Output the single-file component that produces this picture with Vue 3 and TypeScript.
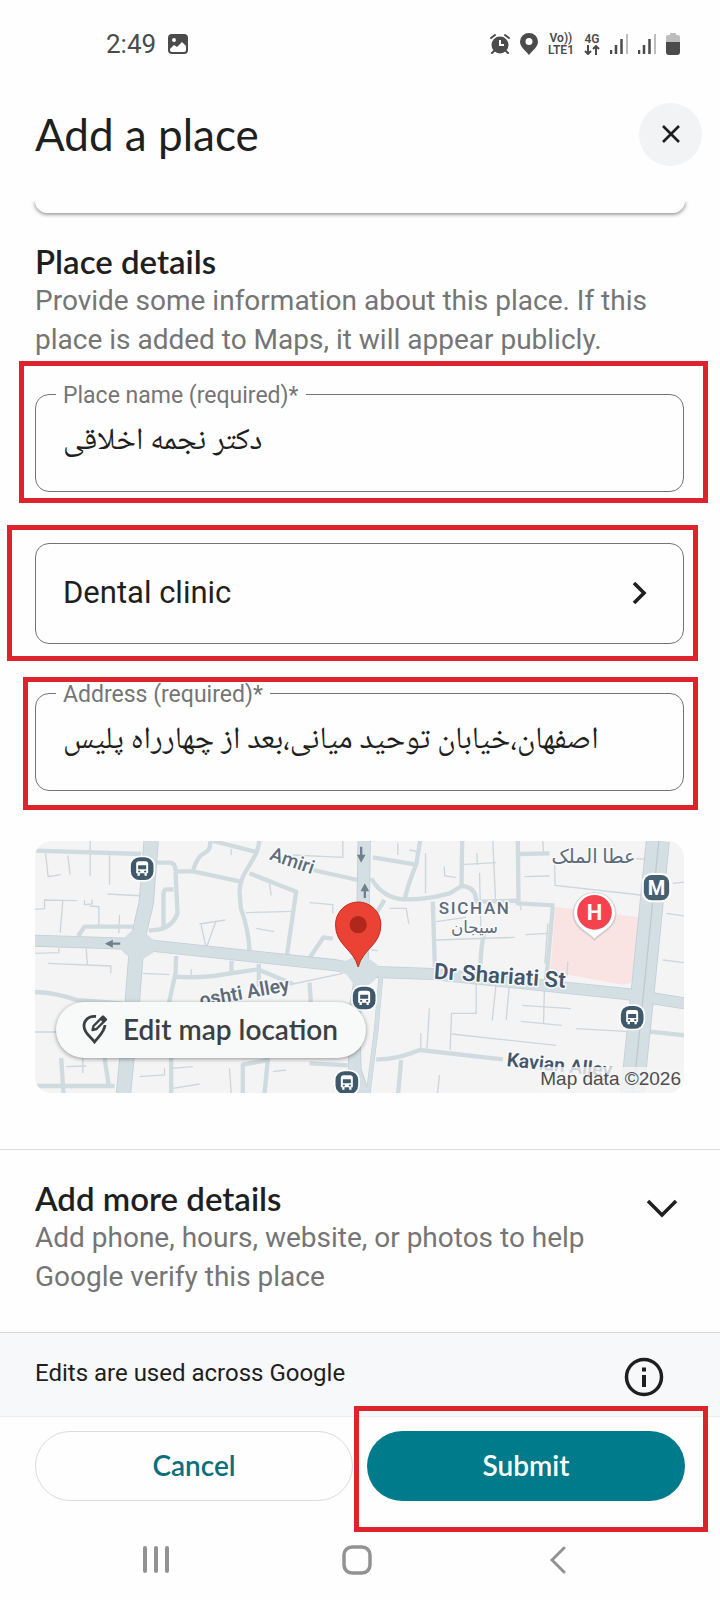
<script setup lang="ts">
import { ref } from 'vue'

const placeName = ref('دکتر نجمه اخلاقی')
const category = ref('Dental clinic')
const address = ref('اصفهان،خیابان توحید میانی،بعد از چهارراه پلیس')

// Map geometry: minor streets, lanes and bus stops in the map's own units
const streets: string[] = [
  'M45 62L365 72', 'M412 98H452Q468 98 468 124', 'M468 124H520L665 155', 'M522 120Q530 80 560 66Q575 55 572 33',
  'M580 33L710 66', 'M720 33L712 66Q700 90 680 122Q662 150 660 185L664 235Q688 300 690 365', 'M690 130L830 185L802 378',
  'M468 124L474 250Q460 290 420 298L388 302', 'M462 178H440Q432 180 432 192V290', 'M176 318L195 290H340',
  'M870 384L912 322L940 326', 'M880 120L1015 150', 'M470 378L468 430L448 520', 'M468 440Q540 446 620 432L715 418L820 462',
  'M636 392V428', 'M45 486Q110 488 170 510L310 520', 'M718 402V470', 'M870 458L874 516', 'M45 768L285 768',
  'M125 684L132 790', 'M255 684L268 768', 'M455 684V790', 'M670 790V704L745 690L735 790', 'M870 700L985 706',
  'M1060 82L1190 104Q1170 150 1155 208', 'M1202 33L1190 104', 'M1055 145Q1090 205 1155 208Q1220 210 1290 190L1326 168L1328 33',
  'M1326 168Q1370 170 1370 215L1490 212L1495 220L1605 226', 'M1495 33L1497 215', 'M1600 230L1582 430', 'M1240 215L1246 410',
  'M1395 305Q1385 340 1382 415', 'M1095 210L1070 250', 'M1500 72L1590 70', 'M1070 688Q1130 690 1200 660L1450 688',
  'M1145 690L1136 790', 'M1890 605L1995 616',
]
const lanes: string[] = [
  'M78 70L86 140L124 134', 'M145 76L152 134', 'M212 33V138', 'M270 76V164', 'M45 238L75 236V210L172 212', 'M195 210V224L218 222V208',
  'M210 228L238 230V290', 'M264 192L376 198', 'M130 212L122 308', 'M300 254L298 310', 'M540 282L618 270', 'M545 285L560 355L590 272',
  'M680 248L820 244', 'M710 295L764 305', 'M870 218L940 224V250', 'M45 370L118 368V355', 'M200 356L204 405', 'M85 400L274 408V430',
  'M370 430L450 434', 'M515 418V438', 'M45 606L110 606', 'M635 56V76', 'M750 160L755 196', 'M820 75L970 82V33', 'M970 430L820 462',
  'M140 710L200 708', 'M190 684V730', 'M360 740L435 735V715', 'M455 715L520 710', 'M460 775L540 762', 'M630 715L635 790', 'M760 725L800 720',
  'M1170 60L1200 66', 'M1135 38V75', 'M1218 70V190', 'M1274 110L1276 138L1310 142', 'M1326 104L1430 98', 'M1380 128L1384 290',
  'M1420 33L1428 210', 'M1372 70L1374 104', 'M1110 235H1160L1168 282', 'M1250 330L1486 322', 'M1518 314L1586 310', 'M1585 280L1576 400',
  'M1515 140L1590 138', 'M1605 104L1607 166L1890 198', 'M1570 33L1572 70', 'M1250 275L1340 262', 'M1370 410V550H1296L1292 660',
  'M1430 460L1418 572', 'M1470 460L1460 570', 'M1576 430L1572 580', 'M1508 526L1654 536', 'M1504 574L1626 586', 'M1670 596L1820 604',
  'M1296 612L1610 646', 'M1230 535L1222 660', 'M1204 610V660', 'M1645 395L1642 440', 'M1260 735L1254 790', 'M1930 390L1995 398',
  'M1940 250L1995 258', 'M1960 160L1995 156', 'M1055 360L1075 362', 'M1850 86L1885 88', 'M1500 215L1505 240',
]
const stops: [number, number][] = [[368, 116], [1034, 504], [982, 758], [1838, 562]]
</script>

<template>
  <div class="screen">
    <div class="status">
      <div class="status-left">
        <span class="clock">2:49</span>
        <svg width="20" height="20" viewBox="0 0 20 20">
          <rect width="20" height="20" rx="4" fill="#4b4b4b" />
          <circle cx="6" cy="6" r="2" fill="#fefefe" />
          <path d="M2 15l4-4 3 2 5-5 4 4v4q0 2-2 2H4q-2 0-2-2z" fill="#fefefe" />
        </svg>
      </div>
      <div class="status-right">
        <svg width="20" height="22" viewBox="0 0 20 22">
          <circle cx="10" cy="12" r="8.500" fill="#4b4b4b" />
          <path d="M1 5l4-3M19 5l-4-3M4 18l-2 2M16 18l2 2" stroke="#4b4b4b" stroke-width="2" stroke-linecap="round" />
          <path d="M10 7v5h4" fill="none" stroke="#fefefe" stroke-width="2" />
        </svg>
        <svg width="18" height="22" viewBox="0 0 18 22">
          <path fill-rule="evenodd" d="M9 22C5 17 0 14 0 8.500a9 8.500 0 0 1 18 0C18 14 13 17 9 22zM9 5a3.500 3.500 0 1 0 0 7 3.500 3.500 0 0 0 0-7z" fill="#4b4b4b" />
        </svg>
        <span class="stack"><span>Vo))</span><span>LTE1</span></span>
        <span class="stack">
          <span>4G</span>
          <svg width="16" height="10" viewBox="0 0 16 10"><path d="M4 0v9M1 6l3 3 3-3M12 10V1M9 4l3-3 3 3" fill="none" stroke="#4b4b4b" stroke-width="2" /></svg>
        </span>
        <svg v-for="n in 2" :key="n" width="18" height="20" viewBox="0 0 18 20" class="signal">
          <path d="M1 16v4M6 11v9M11.500 5v15" stroke="#4b4b4b" stroke-width="2.500" />
          <path d="M17 0v20" stroke="#bdbdbd" stroke-width="2" />
        </svg>
        <svg width="14" height="22" viewBox="0 0 14 22" class="battery">
          <path d="M4 2V1q0-1 1-1h4q1 0 1 1v1h2q2 0 2 2v6H0V4q0-2 2-2z" fill="#bdbdbd" />
          <path d="M0 9h14v10q0 3-3 3H3q-3 0-3-3z" fill="#4b4b4b" />
        </svg>
      </div>
    </div>

    <header class="header">
      <h1>Add a place</h1>
      <button type="button" class="close" aria-label="Close">
        <svg width="20" height="20" viewBox="0 0 20 20"><path d="M2 2l16 16M18 2L2 18" stroke="#1f1f1f" stroke-width="2.600" /></svg>
      </button>
    </header>

    <main>
      <div class="card-end"></div>

      <section class="details">
        <h2>Place details</h2>
        <p>Provide some information about this place. If this place is added to Maps, it will appear publicly.</p>

        <div class="marked mark-name">
          <fieldset>
            <legend><label for="place-name">Place name (required)*</label></legend>
            <input id="place-name" v-model="placeName" type="text" dir="rtl">
          </fieldset>
        </div>

        <div class="marked mark-category">
          <button type="button" class="category">
            <span>{{ category }}</span>
            <svg width="16" height="24" viewBox="0 0 16 24"><path d="M2 2l10 10L2 22" fill="none" stroke="#1f1f1f" stroke-width="3.600" /></svg>
          </button>
        </div>

        <div class="marked mark-address">
          <fieldset>
            <legend><label for="address">Address (required)*</label></legend>
            <input id="address" v-model="address" type="text" dir="rtl">
          </fieldset>
        </div>

        <div class="map">
          <svg class="map-canvas" viewBox="45 33 1950 756" preserveAspectRatio="xMidYMid slice" role="img" aria-label="Map">
            <rect x="45" y="33" width="1950" height="756" fill="#f4f4f5" />
            <path d="M1608 230L1862 262L1846 435Q1840 462 1812 464L1592 425z" fill="#fae4e3" />
            <g fill="none" stroke="#ccd6dc" stroke-width="4">
              <path v-for="d in lanes" :key="d" :d="d" />
            </g>
            <g fill="none" stroke="#d0dbe0" stroke-width="13" stroke-linejoin="round">
              <path v-for="d in streets" :key="d" :d="d" />
            </g>
            <g fill="none" stroke-linejoin="round">
              <g stroke="#c2cfd7">
                <path d="M395 33L380 220L352 340L338 520L312 790" stroke-width="46" />
                <path d="M45 332L350 342L950 406L1050 425L1240 432L1820 492L1995 520" stroke-width="36" />
                <path d="M1034 33L1028 420L1003 560L1006 720L1030 790" stroke-width="40" />
                <path d="M1085 430L1070 600L1046 790" stroke-width="14" />
                <path d="M1915 33L1870 480L1838 790" stroke-width="72" />
              </g>
              <g stroke="#d4dfe4">
                <path d="M395 33L380 220L352 340L338 520L312 790" stroke-width="41" />
                <path d="M45 332L350 342L950 406L1050 425L1240 432L1820 492L1995 520" stroke-width="31" />
                <path d="M1034 33L1028 420L1003 560L1006 720L1030 790" stroke-width="35" />
                <path d="M1085 430L1070 600L1046 790" stroke-width="11" />
                <path d="M1915 33L1870 480L1838 790" stroke-width="67" />
              </g>
              <path d="M1918 33L1873 480L1841 790" stroke="#bccad3" stroke-width="4" />
            </g>
            <path d="M352 295L400 335L396 365L352 392L318 365L300 345z" fill="#d4dfe4" stroke="#d4dfe4" stroke-width="12" stroke-linejoin="round" />
            <path d="M1026 375L1070 408L1064 445L1020 480L985 430L950 412z" fill="#d4dfe4" stroke="#d4dfe4" stroke-width="10" stroke-linejoin="round" />
            <g fill="none" stroke="#70808c" stroke-width="7">
              <path d="M302 341H264" /><path d="M1025 50V84" /><path d="M1036 204V172" />
            </g>
            <path d="M256 341l24-12v24zM1025 98l-13-24h26zM1036 160l-13 24h26z" fill="#70808c" />

            <g class="map-text">
              <text x="748" y="88" transform="rotate(19 748 88)" font-size="57" font-weight="500">Amiri</text>
              <text x="544" y="530" transform="rotate(-10 544 530)" font-size="58" font-weight="600">oshti Alley</text>
              <text x="1258" y="252" font-size="51" font-weight="500" letter-spacing="5">SICHAN</text>
              <text x="1365" y="308" font-size="50" text-anchor="middle">سیجان</text>
              <text x="1722" y="98" font-size="58" text-anchor="middle">عطا الملک</text>
              <text class="main-street" x="1242" y="446" transform="rotate(4 1242 446)" font-size="67" font-weight="600">Dr Shariati St</text>
              <text class="main-street" x="1460" y="708" transform="rotate(6 1460 708)" font-size="58" font-weight="600">Kavian Alley</text>
            </g>

            <g v-for="[x, y] in stops" :key="x" :transform="`translate(${x} ${y})`">
              <rect x="-39" y="-39" width="78" height="78" rx="30" fill="#fdfdfd" />
              <rect x="-34" y="-34" width="68" height="68" rx="26" fill="#3f596b" />
              <path fill-rule="evenodd" d="M-18-14q0-8 8-8h20q8 0 8 8v28h-4v7h-7v-7h-14v7h-7v-7h-4zM-12-10v12h24v-12zM-12 6v5h6v-5zM6 6v5h6v-5z" fill="#fff" />
            </g>
            <g transform="translate(1911 173)">
              <rect x="-44" y="-44" width="88" height="88" rx="28" fill="#fdfdfd" />
              <rect x="-38" y="-38" width="76" height="76" rx="24" fill="#46606f" />
              <text class="badge-text" y="22" font-size="60">M</text>
            </g>
            <g transform="translate(1725 250)">
              <path d="M0 84C-14 62-66 50-66 0a66 64 0 0 1 132 0C66 50 14 62 0 84z" fill="#b9bec4" opacity=".6" />
              <path d="M0 76C-14 56-61 44-61-2a61 60 0 0 1 122 0C61 44 14 56 0 76z" fill="#fff" />
              <circle cy="-3" r="52" fill="#f5424f" />
              <text class="badge-text" y="20" font-size="66">H</text>
            </g>
            <path d="M1016 411C1002 356 948 346 948 284a68 68 0 0 1 136 0C1084 346 1030 356 1016 411z" fill="#ea4335" stroke="#c5281c" stroke-width="3" />
            <circle cx="1016" cy="284" r="26" fill="#b1271b" />
          </svg>
          <span class="credit">Map data ©2026</span>
          <button type="button" class="edit-map">
            <svg width="26" height="30" viewBox="0 0 26 30" fill="none" stroke="#3c4043">
              <path d="M14 2.500C6 1.500 2 7 2 12c0 7 6 10 10.500 16C17 22 22.500 18 23 11" stroke-width="2.800" />
              <path d="M10.500 16l1-4L21 2.500l3 3-9.500 9.500z" stroke-width="2.400" stroke-linejoin="round" />
              <path d="M19 3.500l4 4" stroke-width="4" />
            </svg>
            <span>Edit map location</span>
          </button>
        </div>
      </section>

      <section class="more">
        <div class="more-text">
          <h2>Add more details</h2>
          <p>Add phone, hours, website, or photos to help Google verify this place</p>
        </div>
        <button type="button" class="expand" aria-label="Show more details">
          <svg width="32" height="20" viewBox="0 0 32 20"><path d="M2 2l14 14L30 2" fill="none" stroke="#1f1f1f" stroke-width="3.500" /></svg>
        </button>
      </section>

      <div class="notice">
        <span>Edits are used across Google</span>
        <button type="button" class="info" aria-label="About edits">
          <svg width="40" height="40" viewBox="0 0 40 40">
            <circle cx="20" cy="20" r="17.500" fill="none" stroke="#1f1f1f" stroke-width="3.500" />
            <path d="M20 10.500v4M20 18v12" stroke="#1f1f1f" stroke-width="4" />
          </svg>
        </button>
      </div>
    </main>

    <div class="actions">
      <button type="button" class="cancel">Cancel</button>
      <div class="marked mark-submit">
        <button type="button" class="submit">Submit</button>
      </div>
    </div>

    <nav class="system-nav">
      <button type="button" aria-label="Recent apps">
        <svg width="26" height="28" viewBox="0 0 26 28"><path d="M2 2v23M13 2v23M24 2v23" stroke="#929292" stroke-width="4" stroke-linecap="round" /></svg>
      </button>
      <button type="button" aria-label="Home">
        <svg width="30" height="30" viewBox="0 0 30 30"><rect x="2" y="2" width="26" height="26" rx="8" fill="none" stroke="#929292" stroke-width="3.500" /></svg>
      </button>
      <button type="button" aria-label="Back">
        <svg width="16" height="28" viewBox="0 0 16 28"><path d="M14 2L2 14l12 12" fill="none" stroke="#929292" stroke-width="3" stroke-linecap="round" /></svg>
      </button>
    </nav>
  </div>
</template>

<style>
body {
  margin: 0;
  background: #fefefe;
}
</style>

<style scoped>
.screen {
  font-family: Roboto, "Noto Sans", "DejaVu Sans", sans-serif;
  color: #1f1f1f;
  background: #fefefe;
  min-height: 100vh;
  display: flex;
  flex-direction: column;
}
button {
  font: inherit;
  color: inherit;
  background: none;
  border: 0;
  padding: 0;
  cursor: pointer;
}
svg {
  display: block;
  flex: none;
}
h1, h2, p {
  margin: 0;
}
.status {
  height: 88px;
  padding: 0 40px 0 106px;
  display: flex;
  align-items: center;
  justify-content: space-between;
  color: #4b4b4b;
}
.status-left {
  display: flex;
  align-items: center;
  gap: 12px;
}
.clock {
  font-size: 26px;
}
.status-right {
  display: flex;
  align-items: center;
  gap: 10px;
}
.stack {
  display: flex;
  flex-direction: column;
  align-items: center;
  font-size: 12px;
  line-height: 12px;
  font-weight: 600;
}
.header {
  height: 92px;
  padding: 0 18px 21px 35px;
  display: flex;
  align-items: center;
  justify-content: space-between;
}
h1, h2, .edit-map, .actions {
  font-family: Lato, "Open Sans", sans-serif;
}
h1 {
  font-size: 44px;
  line-height: 52px;
  font-weight: 400;
}
.close {
  width: 63px;
  height: 63px;
  border-radius: 50%;
  background: #f1f3f5;
  display: grid;
  place-items: center;
}
.card-end {
  height: 12px;
  margin: 0 35px;
  border-radius: 0 0 16px 16px;
  box-shadow: 0 1px 4px #777;
  clip-path: inset(0 -8px -8px -8px);
}
.details {
  padding: 28px 36px 56px 35px;
  display: flex;
  flex-direction: column;
}
h2 {
  font-size: 33px;
  line-height: 40px;
  font-weight: 600;
}
p {
  font-size: 28px;
  line-height: 39px;
  color: #757575;
}
.marked {
  position: relative;
}
.marked::after {
  content: "";
  position: absolute;
  border: 5px solid #dd232b;
  pointer-events: none;
}
.mark-name {
  margin-top: 22px;
}
.mark-name::after {
  inset: -20px -24px -11px -16px;
}
.mark-category {
  margin-top: 51px;
}
.mark-category::after {
  inset: -18px -14px -17px -28px;
}
.mark-address {
  margin-top: 36px;
}
.mark-address::after {
  inset: -3px -14px -19px -12px;
}
fieldset {
  margin: 0;
  min-width: 0;
  padding: 0 27px 0 20px;
  border: 1px solid #757575;
  border-radius: 14px;
}
legend {
  padding: 4px 7px 0;
  font-size: 23px;
  line-height: 22px;
  color: #757575;
}
input {
  display: block;
  box-sizing: border-box;
  width: 100%;
  height: 84px;
  padding: 0 0 14px 7px;
  border: 0;
  outline: 0;
  background: none;
  font-family: "Noto Naskh Arabic", "Noto Sans Arabic", "DejaVu Sans", sans-serif;
  font-size: 31px;
  color: #1f1f1f;
  text-align: left;
}
.category {
  width: 100%;
  height: 101px;
  padding: 0 35px 2px 27px;
  border: 1px solid #757575;
  border-radius: 14px;
  display: flex;
  align-items: center;
  justify-content: space-between;
  font-size: 31px;
}
.map {
  position: relative;
  height: 252px;
  margin-top: 50px;
  border-radius: 16px;
  overflow: hidden;
}
.map-canvas {
  width: 100%;
  height: 100%;
}
.map-text {
  fill: #5d6b7a;
  stroke: #f8f9fa;
  stroke-width: 9px;
  paint-order: stroke;
  stroke-linejoin: round;
}
.main-street {
  fill: #44566a;
}
.badge-text {
  fill: #fff;
  font-weight: 700;
  text-anchor: middle;
}
.credit {
  position: absolute;
  right: 0;
  bottom: 0;
  padding: 0 3px 2px;
  background: #f5f5f5cc;
  font-family: "Liberation Sans", sans-serif;
  font-size: 19px;
  line-height: 24px;
  color: #4d4d4d;
}
.edit-map {
  position: absolute;
  left: 21px;
  bottom: 35px;
  height: 56px;
  padding: 0 28px 2px 26px;
  border-radius: 28px;
  background: #f8faf9;
  box-shadow: 0 1px 4px #0006;
  display: flex;
  align-items: center;
  gap: 15px;
  font-size: 28px;
  font-weight: 600;
  color: #3c4043;
}
.more {
  border-top: 1px solid #dadada;
  padding: 28px 42px 36px 35px;
  display: flex;
  justify-content: space-between;
}
.more-text {
  max-width: 580px;
}
.expand {
  align-self: flex-start;
  padding: 21px 0;
}
.notice {
  border-top: 1px solid #dadada;
  padding: 24px 56px 19px 35px;
  background: #f6f8fa;
  display: flex;
  justify-content: space-between;
  align-items: flex-start;
  font-size: 24px;
  line-height: 32px;
}
.actions {
  border-top: 1px solid #ececec;
  padding: 14px 35px 0;
  display: grid;
  grid-template-columns: 1fr 1fr;
  gap: 14px;
  font-size: 28px;
  font-weight: 600;
}
.cancel, .submit {
  width: 100%;
  height: 70px;
  padding-bottom: 2px;
  border-radius: 35px;
}
.cancel {
  border: 1px solid #dadce0;
  color: #0b6f7c;
}
.submit {
  background: #007b8b;
  color: #fff;
}
.mark-submit::after {
  inset: -25px -23px -31px -13px;
}
.system-nav {
  flex: 1;
  padding: 18px 61px 0 55px;
  display: grid;
  grid-template-columns: repeat(3, 1fr);
  place-items: center;
}
</style>
